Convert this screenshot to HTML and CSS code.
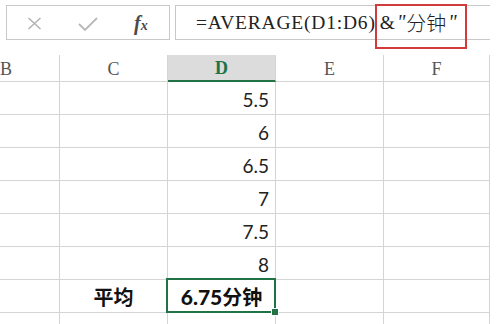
FILE: index.html
```html
<!DOCTYPE html>
<html>
<head>
<meta charset="utf-8">
<link rel="stylesheet" href="styles.css">
</head>
<body>
<div class="page">
  <div class="toolbar">
    <div class="iconbox">
      <svg class="ico-x" width="15" height="13" viewBox="0 0 15 13"><path d="M1.5 1 L13.5 12 M13.5 1 L1.5 12" stroke="#b3b3b3" stroke-width="1.6" fill="none"/></svg>
      <svg class="ico-ok" width="20" height="14" viewBox="0 0 20 14"><path d="M1 7 L7 13 L19 1" stroke="#b8b8b8" stroke-width="1.8" fill="none"/></svg>
      <span class="ico-fx"><span class="f">f</span><span class="x">x</span></span>
    </div>
    <div class="formula"><span class="lat">=AVERAGE(D1:D6)</span><span class="amp">&amp;</span><span class="q">"</span><span class="cjk">分钟</span><span class="q">"</span></div>
    <div class="redbox"></div>
  </div>
  <div class="sheet">
    <div class="hd">B</div><div class="hd">C</div><div class="hd sel">D</div><div class="hd">E</div><div class="hd">F</div>

    <div class="c"></div><div class="c"></div><div class="c num">5.5</div><div class="c"></div><div class="c"></div>
    <div class="c"></div><div class="c"></div><div class="c num">6</div><div class="c"></div><div class="c"></div>
    <div class="c"></div><div class="c"></div><div class="c num">6.5</div><div class="c"></div><div class="c"></div>
    <div class="c"></div><div class="c"></div><div class="c num">7</div><div class="c"></div><div class="c"></div>
    <div class="c"></div><div class="c"></div><div class="c num">7.5</div><div class="c"></div><div class="c"></div>
    <div class="c"></div><div class="c"></div><div class="c num">8</div><div class="c"></div><div class="c"></div>
    <div class="c"></div><div class="c label">平均</div><div class="c result"><span class="rn">6.75</span><span class="rc">分钟</span></div><div class="c"></div><div class="c"></div>
    <div class="c"></div><div class="c"></div><div class="c"></div><div class="c"></div><div class="c"></div>
  </div>
</div>
</body>
</html>
```

FILE: styles.css
```css
html, body {
  margin: 0;
  padding: 0;
  background: #ffffff;
}
.page {
  position: relative;
  width: 497px;
  height: 324px;
  overflow: hidden;
}
.toolbar {
  display: flex;
  align-items: flex-start;
  gap: 5px;
  padding: 5px 0 0 6px;
  height: 50px;
  box-sizing: border-box;
}
.iconbox {
  width: 164px;
  height: 35px;
  box-sizing: border-box;
  border: 1px solid #c8c8c8;
  display: flex;
  align-items: center;
  padding-left: 20px;
}
.ico-x { margin-top: 1px; }
.ico-ok { margin-left: 36px; margin-top: 3px; }
.ico-fx {
  margin-left: 36px;
  font-family: "Liberation Serif", serif;
  font-style: italic;
  font-weight: bold;
  color: #4a4a4a;
  line-height: 1;
}
.ico-fx .f { font-size: 20px; }
.ico-fx .x { font-size: 14px; }
.formula {
  width: 315px;
  height: 35px;
  box-sizing: border-box;
  border-top: 1px solid #c8c8c8;
  border-bottom: 1px solid #c8c8c8;
  border-left: 1px solid #c8c8c8;
  display: flex;
  align-items: center;
  padding-left: 20px;
  color: #222;
  white-space: nowrap;
}
.formula .lat {
  font-family: "Liberation Serif", serif;
  font-size: 19.5px;
  letter-spacing: 0.8px;
}
.formula .amp {
  font-family: "Liberation Serif", serif;
  font-size: 19.5px;
  margin-left: 4px;
}
.formula .q {
  font-family: "Liberation Serif", serif;
  font-style: italic;
  font-size: 20px;
  margin: 0 1px 0 2px;
}
.formula .cjk {
  font-family: "Noto Sans CJK SC", sans-serif;
  font-size: 20px;
  font-weight: 300;
}
.redbox {
  position: absolute;
  left: 375px;
  top: 4px;
  width: 92px;
  height: 45px;
  box-sizing: border-box;
  border: 2px solid #d23b3b;
}
.sheet {
  display: grid;
  grid-template-columns: 60px 108px 108px 108px 106px;
  grid-template-rows: 27px repeat(7, 33px) 33px;
  margin-top: 5px;
}
.sheet > div {
  box-sizing: border-box;
  border-right: 1px solid #d4d4d4;
  border-bottom: 1px solid #d4d4d4;
}
.hd {
  font-family: "Liberation Serif", serif;
  font-size: 18px;
  color: #555;
  display: flex;
  align-items: center;
  justify-content: center;
  border-bottom: 1px solid #d4d4d4;
  padding-top: 2px;
}
.hd:first-child {
  justify-content: flex-start;
  padding-left: 0;
}
.hd.sel {
  background: #dcdcdc;
  color: #217346;
  font-weight: bold;
  border-bottom: 2px solid #217346;
}
.c {
  display: flex;
  align-items: center;
}
.num {
  justify-content: flex-end;
  padding-right: 6px;
  font-family: Lato, "Open Sans", sans-serif;
  font-size: 19px;
  color: #222;
  padding-top: 2px;
}
.label {
  justify-content: center;
  font-family: "Noto Sans CJK SC", sans-serif;
  font-weight: bold;
  font-size: 20px;
  color: #111;
}
.result {
  position: relative;
  justify-content: center;
  font-weight: bold;
  color: #111;
}
.result .rn {
  font-family: Lato, "Open Sans", sans-serif;
  font-size: 21px;
  font-weight: 900;
}
.result .rc {
  font-family: "Noto Sans CJK SC", sans-serif;
  font-size: 20px;
  font-weight: bold;
}
.result::after {
  content: "";
  position: absolute;
  left: -2px;
  top: -2px;
  right: -1px;
  bottom: -1px;
  border: 2px solid #217346;
}
.result::before {
  content: "";
  position: absolute;
  right: -4px;
  bottom: -4px;
  width: 6px;
  height: 6px;
  background: #217346;
  border: 1px solid #fff;
  z-index: 2;
}
```
